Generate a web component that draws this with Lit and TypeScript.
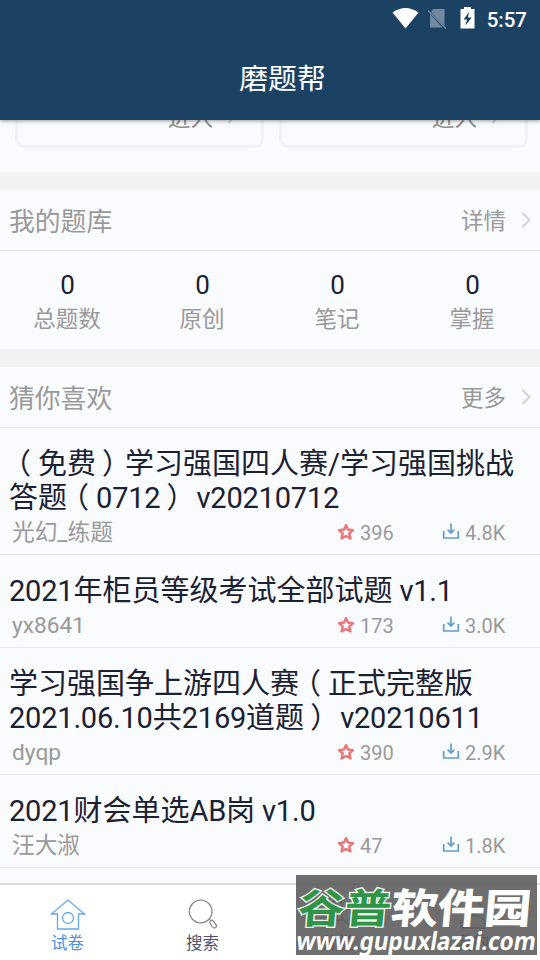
import { LitElement, html, css, svg } from "lit";
import { customElement } from "lit/decorators.js";

const chevron = html`<svg class="chevron" width="10" height="16" viewBox="0 0 10 16">
  <path d="M1.5 1 L8.5 8 L1.5 15" fill="none" stroke="#d0d1d4" stroke-width="1.8" />
</svg>`;

const star = html`<svg width="18" height="18" viewBox="0 0 18 18">
  <path d="M9 2.2 L11 6.6 L15.9 7.2 L12.3 10.4 L13.4 15.4 L9 13 L4.6 15.4 L5.7 10.4 L2.1 7.2 L7 6.6 Z"
    fill="none" stroke="#e87878" stroke-width="2.5" stroke-linejoin="round" />
</svg>`;

const download = html`<svg width="18" height="18" viewBox="0 0 18 18">
  <path d="M1.7 8 V15 H16.3 V8" fill="none" stroke="#649ccb" stroke-width="1.7" />
  <path d="M9 0.5 V10 M5.6 6.6 L9 10 L12.4 6.6" fill="none" stroke="#649ccb" stroke-width="1.7" />
</svg>`;

const tabs = [
  { label: "试卷", kind: "active", icon: svg`<path d="M1.5 16 L18 2 L34.5 16 H28.5 V31 H7.5 V16 Z" /><circle cx="18" cy="20" r="5.5" />` },
  { label: "搜索", kind: "", icon: svg`<circle cx="15.7" cy="13.5" r="11.3" /><path d="M23.7 21.8 L25.2 20.8 M25.2 23.2 Q26.5 21.2 28.2 23 L31.3 27 Q32 29.5 29.5 30 Q28 30 27 28.5 L25 25 Q24.4 24 25.2 23.2 Z" />` },
  { label: "分类", kind: "", icon: svg`<path d="M4 4 H22 V22 H4 Z M22 20 L32 30" />` },
  { label: "我的", kind: "", icon: svg`<circle cx="18" cy="9" r="7.5" /><path d="M6 30 V25 Q7 20 13 18 H23 Q29 20 30 25 V30 Z" />` },
];

const papers = [
  { lines: ["（免费）学习强国四人赛/学习强国挑战", "答题（0712） v20210712"], author: "光幻_练题", stars: "396", loads: "4.8K" },
  { lines: ["2021年柜员等级考试全部试题 v1.1"], author: "yx8641", stars: "173", loads: "3.0K" },
  { lines: ["学习强国争上游四人赛（正式完整版", "2021.06.10共2169道题） v20210611"], author: "dyqp", stars: "390", loads: "2.9K" },
  { lines: ["2021财会单选AB岗 v1.0"], author: "汪大淑", stars: "47", loads: "1.8K" },
];

const stats = ["总题数", "原创", "笔记", "掌握"];

// Full-width brackets sit nearer the middle of their em box; Latin runs are set a little tighter.
const typeset = (text: string) =>
  text.split(/([（）]|[\w. ]+)/).map((part) => {
    if (part === "（") return html`<span class="open">（</span>`;
    if (part === "）") return html`<span class="close">）</span>`;
    return /^[\w. ]+$/.test(part) ? html`<span class="latin">${part}</span>` : part;
  });

@customElement("app-root")
export class AppRoot extends LitElement {
  static styles = css`
    :host {
      display: flex;
      flex-direction: column;
      position: relative;
      width: 540px;
      height: 960px;
      overflow: hidden;
      background: #fafbff;
      color: #1a2130;
      font-family: Roboto, "Noto Sans CJK SC", sans-serif;
    }
    * { box-sizing: border-box; }
    svg { display: block; flex: none; }
    .top {
      flex: none;
      height: 120px;
      background: #1c4263;
      color: #fff;
      box-shadow: 0 1px 4px rgba(0, 0, 0, 0.4);
      z-index: 1;
    }
    .status {
      display: flex;
      justify-content: flex-end;
      align-items: center;
      height: 38px;
      padding-right: 13px;
      font-size: 20.5px;
      font-weight: 500;
      line-height: 38px;
    }
    .status span { margin-left: 7px; padding-top: 2px; }
    .title {
      padding: 1px 0 0 25px;
      font-size: 28.8px;
      line-height: 80px;
      text-align: center;
    }
    .cards {
      display: flex;
      flex: none;
      gap: 15px;
      height: 52px;
      padding: 0 12px 24px 15px;
    }
    .card {
      display: flex;
      justify-content: flex-end;
      align-items: flex-end;
      flex: 1;
      gap: 14px;
      height: 60px;
      margin-top: -32px;
      padding: 0 24px 14px 0;
      border: 3px solid #f2f2f5;
      border-radius: 9px;
      color: #8f8f8f;
      font-size: 22.5px;
      line-height: 26px;
    }
    .card .chevron { margin-bottom: 7px; }
    .band { flex: none; height: 18px; background: #f2f2f2; }
    .head {
      display: flex;
      align-items: center;
      flex: none;
      height: 61px;
      padding: 0 9px 2px 9px;
      border-bottom: 1px solid #e4e6ea;
      color: #999;
      font-size: 25.8px;
    }
    .head .more { margin: 0 15px 0 auto; font-size: 22.5px; }
    .head .chevron { margin-top: 1px; }
    .stats { display: flex; flex: none; height: 98px; }
    .stat { flex: 1; padding-top: 18px; text-align: center; }
    .count { font-size: 26px; line-height: 32px; }
    .label { margin: 1px 1px 0 0; color: #999; font-size: 22.5px; line-height: 34px; }
    .paper { flex: none; padding: 19px 9px 6px; border-bottom: 1px solid #e4e6ea; }
    .line { font-size: 29px; line-height: 34px; height: 34px; white-space: pre; }
    .latin { letter-spacing: -0.2px; }
    .open, .close { display: inline-block; }
    .open { transform: translateX(-7px); }
    .close { transform: translateX(6px); }
    .meta {
      display: flex;
      align-items: center;
      height: 32px;
      margin-top: 1px;
      padding: 2px 0 0 3px;
      color: #999;
      font-size: 20px;
      line-height: 32px;
    }
    .author { width: 325px; font-size: 22.7px; }
    .stars { display: flex; align-items: center; gap: 5px; width: 105px; }
    .loads { display: flex; align-items: center; gap: 5px; }
    .meta svg { margin-top: -2px; }
    .tabs {
      display: flex;
      flex: none;
      height: 77px;
      margin-top: auto;
      border-top: 2px solid #d8dadd;
      background: #fff;
    }
    .tab {
      display: flex;
      flex-direction: column;
      align-items: center;
      flex: 1;
      padding-top: 13px;
      color: #4d5472;
      font-size: 16.5px;
      line-height: 24px;
    }
    .tab svg { margin-bottom: 1px; fill: none; stroke: #8b8b8b; stroke-width: 1.3; }
    .active { color: #4a90e2; }
    .active svg { stroke: #66a5f0; }
    .mark {
      position: absolute;
      left: 296px;
      top: 875px;
      width: 241px;
      height: 80px;
      background: rgba(88, 88, 88, 0.87);
      color: #fff;
      white-space: nowrap;
      z-index: 2;
    }
    .brand {
      width: 241px;
      height: 50px;
      padding: 7px 0 0 3px;
      font: 700 46.6px/50px "Noto Sans CJK SC", sans-serif;
      transform: skewX(-5deg) scaleY(0.87);
      -webkit-text-stroke: 0.8px #fff;
    }
    .green {
      color: #2f9447;
      -webkit-text-stroke: 3px #eef5ee;
      paint-order: stroke fill;
    }
    .site {
      display: flex;
      justify-content: center;
      font: 700 25px/30px "Noto Sans", sans-serif;
      transform: skewX(-9deg) scaleX(0.9);
    }
  `;

  render() {
    return html`
      <header class="top">
        <div class="status">
          <svg width="88" height="24" viewBox="0 0 88 24">
            <path d="M0.5 5.5 Q13.5 -3.5 26.5 5.5 L13.5 21.5 Z" fill="#fff" />
            <path d="M41 2 H52.5 V19 L39 5 Z M38 7 L50.5 20.5 H38 Z" fill="#718a9f" />
            <path d="M36 3.5 L54 21.5" stroke="#718a9f" stroke-width="1.5" />
            <path d="M68.5 2 H72 V0 H79 V2 H82.5 V21.5 H68.5 Z" fill="#fff" />
            <path d="M77 5 L71.5 12.5 H75 L73.5 18.5 L79.7 10.5 H76 Z" fill="#1c4263" />
          </svg>
          <span>5:57</span>
        </div>
        <div class="title">磨题帮</div>
      </header>
      <div class="cards">
        <div class="card">进入 ${chevron}</div>
        <div class="card">进入 ${chevron}</div>
      </div>
      <div class="band"></div>
      <div class="head">我的题库<span class="more">详情</span>${chevron}</div>
      <div class="stats">
        ${stats.map((s) => html`<div class="stat"><div class="count">0</div><div class="label">${s}</div></div>`)}
      </div>
      <div class="band"></div>
      <div class="head">猜你喜欢<span class="more">更多</span>${chevron}</div>
      ${papers.map(
        (p) => html`<article class="paper">
          ${p.lines.map((l) => html`<div class="line">${typeset(l)}</div>`)}
          <div class="meta">
            <span class="author">${p.author}</span>
            <span class="stars">${star}${p.stars}</span>
            <span class="loads">${download}${p.loads}</span>
          </div>
        </article>`
      )}
      <nav class="tabs">
        ${tabs.map(
          (t) => html`<div class="tab ${t.kind}"><svg width="36" height="33" viewBox="0 0 36 33">${t.icon}</svg>${t.label}</div>`
        )}
      </nav>
      <div class="mark">
        <div class="brand"><span class="green">谷普</span>软件园</div>
        <div class="site">www.gupuxlazai.com</div>
      </div>
    `;
  }
}
